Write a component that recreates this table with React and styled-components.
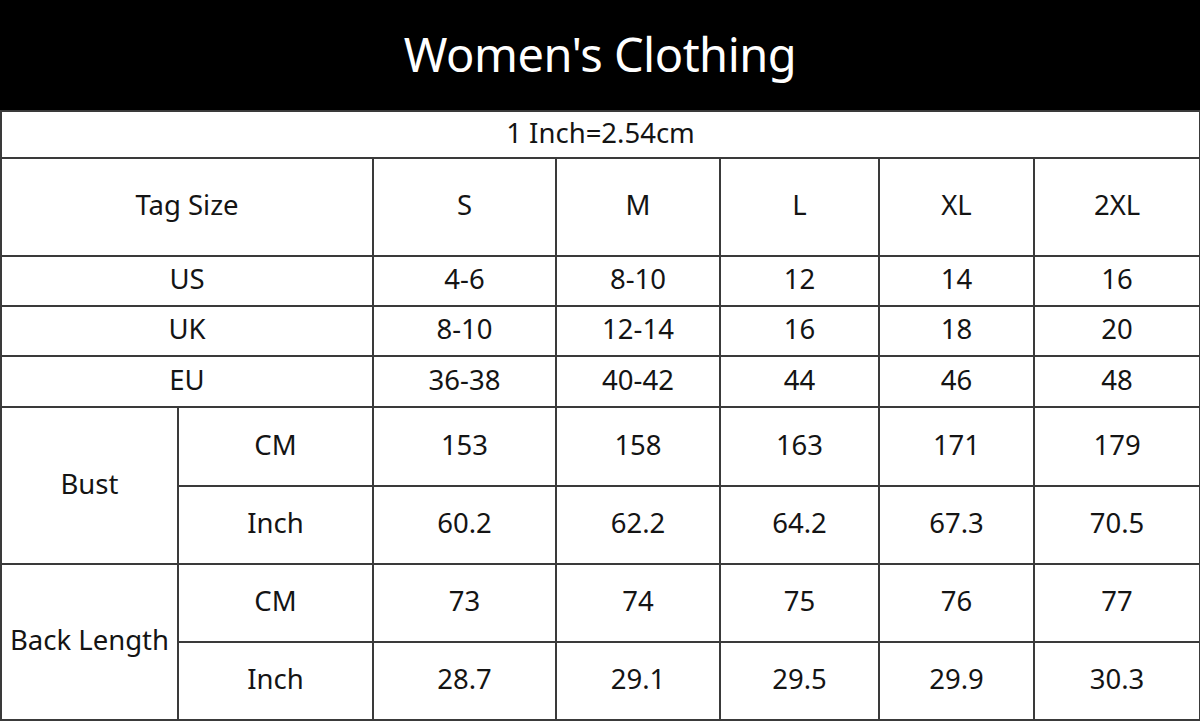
import React from "react";
import styled, { createGlobalStyle } from "styled-components";

const Global = createGlobalStyle`
html, body {
margin: 0;
padding: 0;
background: #fff;
}
body {
font-family: "Noto Sans", "Open Sans", sans-serif;
}
`

const sizes = ["S", "M", "L", "XL", "2XL"]
const simpleRows = [
	{label: "US", values: ["4-6", "8-10", "12", "14", "16"], h: 50},
	{label: "UK", values: ["8-10", "12-14", "16", "18", "20"], h: 50},
	{label: "EU", values: ["36-38", "40-42", "44", "46", "48"], h: 51},
]
const groups = [
	{label: "Bust", rows: [
		{unit: "CM", values: ["153", "158", "163", "171", "179"], h: 79},
		{unit: "Inch", values: ["60.2", "62.2", "64.2", "67.3", "70.5"], h: 78},
	]},
	{label: "Back Length", rows: [
		{unit: "CM", values: ["73", "74", "75", "76", "77"], h: 78},
		{unit: "Inch", values: ["28.7", "29.1", "29.5", "29.9", "30.3"], h: 78},
	]},
]
const colWidths = [177, 195, 183, 164, 159, 155, 166]

export default function App() {
	return (
		<Page>
			<Global />
			<Header>Women's Clothing</Header>
			<Table>
				<colgroup>
					{colWidths.map((w, i) => <col key={i} style={{width: `${w}px`}} />)}
				</colgroup>
				<tbody>
					<Row h={47}>
						<Cell colSpan={7}>1 Inch=2.54cm</Cell>
					</Row>
					<Row h={98}>
						<Cell colSpan={2}>Tag Size</Cell>
						{sizes.map(s => <Cell key={s}>{s}</Cell>)}
					</Row>
					{simpleRows.map(r => (
						<Row key={r.label} h={r.h}>
							<Cell colSpan={2}>{r.label}</Cell>
							{r.values.map((v, i) => <Cell key={i}>{v}</Cell>)}
						</Row>
					))}
					{groups.map(g => g.rows.map((r, ri) => (
						<Row key={g.label + r.unit} h={r.h}>
							{ri === 0 && <Cell rowSpan={2} tight>{g.label}</Cell>}
							<Cell>{r.unit}</Cell>
							{r.values.map((v, i) => <Cell key={i}>{v}</Cell>)}
						</Row>
					)))}
				</tbody>
			</Table>
		</Page>
	)
}

const Page = styled.div`
width: 1200px;
`
const Header = styled.div`
height: 110px;
background: #000;
color: #fff;
display: flex;
align-items: center;
justify-content: center;
font-size: 47px;
letter-spacing: -0.5px;
padding-bottom: 2px;
box-sizing: border-box;
`
const Table = styled.table`
width: 1199px;
border-collapse: collapse;
table-layout: fixed;
color: #141414;
font-size: 27.5px;
`
const Row = styled.tr`
height: ${p => p.h}px;
`
const Cell = styled.td`
border: 2px solid #3a3a3a;
text-align: center;
vertical-align: middle;
padding: 0 ${p => p.tight ? 0 : 4}px 4px;
white-space: nowrap;
line-height: 1;
`
